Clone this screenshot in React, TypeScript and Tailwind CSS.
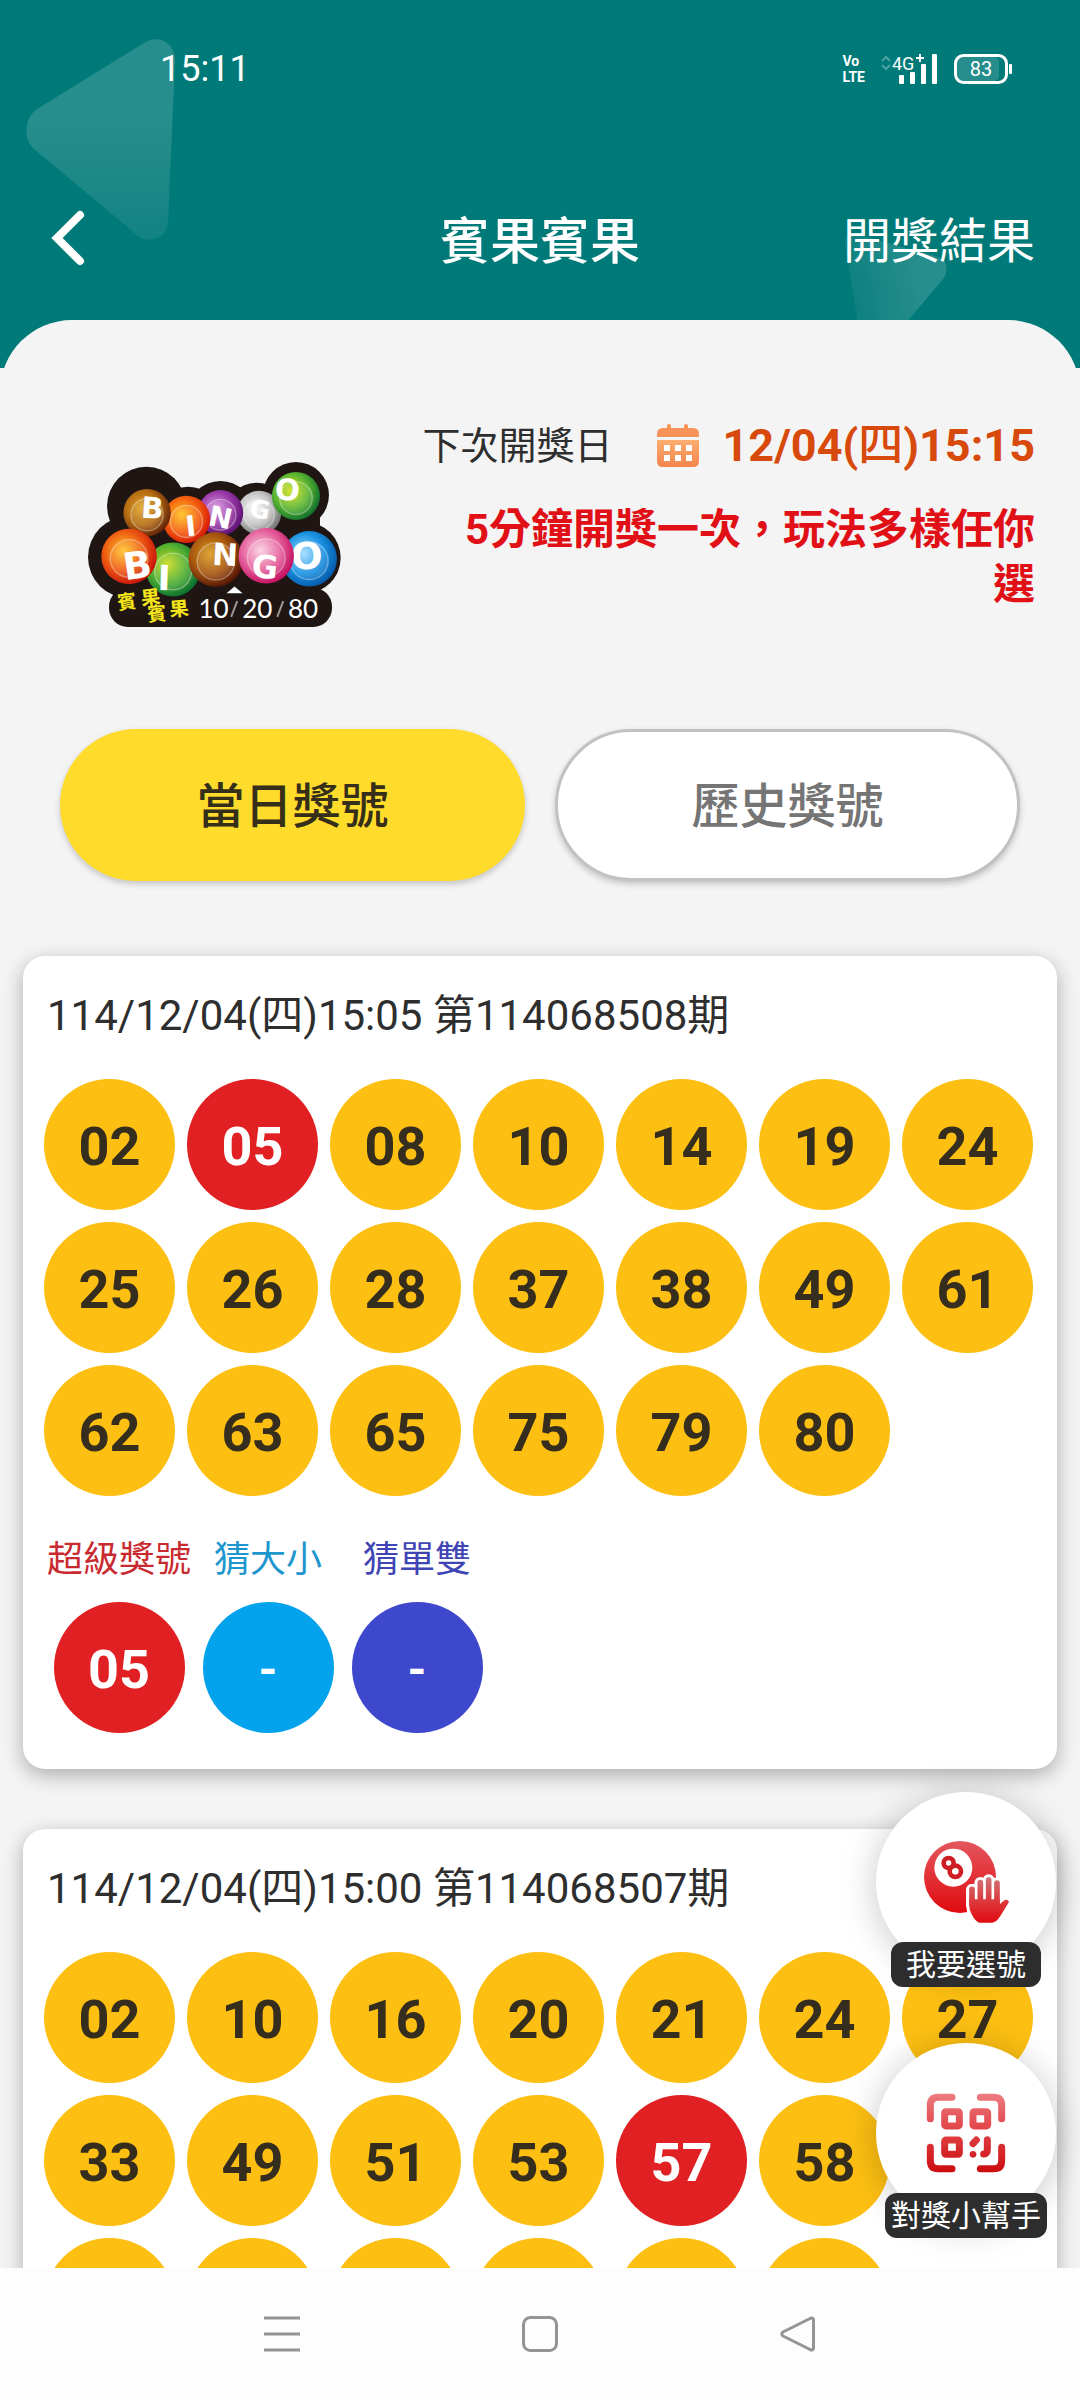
import { useState } from 'react';
import clsx from 'clsx';

type Draw = {
  time: string;
  period: string;
  numbers: string[];
  superNumber: string;
  guesses?: { size: string; parity: string };
};

const DRAW_SIZE = 20;

const draws: Draw[] = [
  {
    time: '114/12/04(四)15:05',
    period: '第114068508期',
    numbers: [
      '02', '05', '08', '10', '14', '19', '24',
      '25', '26', '28', '37', '38', '49', '61',
      '62', '63', '65', '75', '79', '80',
    ],
    superNumber: '05',
    guesses: { size: '-', parity: '-' },
  },
  {
    time: '114/12/04(四)15:00',
    period: '第114068507期',
    numbers: ['02', '10', '16', '20', '21', '24', '27', '33', '49', '51', '53', '57', '58'],
    superNumber: '57',
  },
];

const tabs = ['當日獎號', '歷史獎號'];

const StatusIcons = () => (
  <div className="flex items-center gap-4 text-white">
    <div className="text-[14px] leading-[16px] font-bold">
      <div>Vo</div>
      <div>LTE</div>
    </div>
    <svg className="overflow-visible" width="56" height="32" viewBox="0 0 56 32" fill="none">
      <g stroke="#fff" strokeOpacity="0.3" strokeWidth="2">
        <path d="M1 8l4-4 4 4M1 12l4 4 4-4" />
      </g>
      <text x="11" y="17" fontSize="18" fill="#fff">4G</text>
      <path d="M39 1v8M35 5h8" stroke="#fff" strokeWidth="2" />
      <g fill="#fff">
        <rect x="18" y="22" width="5" height="9" rx="1" />
        <rect x="29" y="19" width="5" height="12" rx="1" />
        <rect x="40" y="11" width="5" height="20" rx="1" />
        <rect x="51" y="1" width="5" height="30" rx="1" />
      </g>
    </svg>
    <svg width="60" height="32" viewBox="0 0 60 32" fill="none">
      <rect x="4" y="4" width="42" height="24" rx="5" fill="#fff" fillOpacity="0.15" />
      <rect x="2.5" y="2.5" width="51" height="27" rx="8" stroke="#fff" strokeWidth="3" />
      <rect x="56" y="11" width="3" height="10" rx="1" fill="#fff" />
      <text x="28" y="23" fontSize="20" fill="#fff" textAnchor="middle">83</text>
    </svg>
  </div>
);

const HeaderShapes = () => (
  <svg className="absolute left-0 top-0" width="1080" height="368" viewBox="0 0 1080 368" fill="none">
    <defs>
      <linearGradient id="shapeLeft" x1="0" y1="40" x2="0" y2="240" gradientUnits="userSpaceOnUse">
        <stop offset="0.4" stopColor="#fff" stopOpacity="0.15" />
        <stop offset="1" stopColor="#fff" stopOpacity="0.07" />
      </linearGradient>
      <linearGradient id="shapeRight" x1="945" y1="270" x2="848" y2="290" gradientUnits="userSpaceOnUse">
        <stop offset="0.3" stopColor="#fff" stopOpacity="0.15" />
        <stop offset="1" stopColor="#fff" stopOpacity="0.05" />
      </linearGradient>
    </defs>
    <path d="M144 43C158 34 175 42 175 60L168 222C167 238 149 245 137 235L34 149C23 140 24 118 37 109Z" fill="url(#shapeLeft)" />
    <path d="M845 244C844 236 850 232 858 235L938 257C947 260 949 270 944 278L905 324H858Z" fill="url(#shapeRight)" />
  </svg>
);

const logoBalls = [
  { id: 'grey', x: 598, y: 215, r: 66, light: '#ffffff', mid: '#c4c4c4', dark: '#6d6d6d', letter: 'G', size: 74, tilt: 10, tx: 596, ty: 231 },
  { id: 'purple', x: 482, y: 215, r: 68, light: '#d79be0', mid: '#9a3aa8', dark: '#5a0f70', letter: 'N', size: 84, tilt: 12, tx: 476, ty: 258 },
  { id: 'orange', x: 380, y: 235, r: 71, light: '#ffc21a', mid: '#f4600f', dark: '#d31408', letter: 'I', size: 84, tilt: -6, tx: 396, ty: 284 },
  { id: 'amber', x: 262, y: 215, r: 71, light: '#e0a52a', mid: '#b56c12', dark: '#5b1d08', letter: 'B', size: 88, tilt: 4, tx: 276, ty: 232 },
  { id: 'green', x: 708, y: 165, r: 72, light: '#d4e21c', mid: '#5cb531', dark: '#0b6a2c', letter: 'O', size: 88, tilt: 4, tx: 680, ty: 177 },
  { id: 'lime', x: 340, y: 385, r: 81, light: '#c9dc1e', mid: '#4fae32', dark: '#04692f', letter: 'I', size: 104, tilt: 2, tx: 312, ty: 447 },
  { id: 'red', x: 208, y: 346, r: 83, light: '#ffc52b', mid: '#ee5a12', dark: '#c40d0c', letter: 'B', size: 112, tilt: -8, tx: 238, ty: 411 },
  { id: 'brown', x: 468, y: 355, r: 82, light: '#d99b1d', mid: '#a8560f', dark: '#4d0f06', letter: 'N', size: 92, tilt: 3, tx: 494, ty: 373 },
  { id: 'blue', x: 748, y: 353, r: 83, light: '#9fdcff', mid: '#1a92e2', dark: '#0456a6', letter: 'O', size: 112, tilt: 0, tx: 740, ty: 385 },
  { id: 'pink', x: 619, y: 344, r: 83, light: '#fbd0e0', mid: '#e5609c', dark: '#c10a5c', letter: 'G', size: 96, tilt: 6, tx: 612, ty: 411 },
];

const BingoLogo = () => (
  <svg className="w-[253px] shrink-0" viewBox="85 60 758 498" role="img" aria-label="BINGO BINGO">
    <defs>
      {logoBalls.map((b) => (
        <radialGradient key={b.id} id={`ball-${b.id}`} cx="0.4" cy="0.4" r="0.65">
          <stop offset="0" stopColor={b.light} />
          <stop offset="0.55" stopColor={b.mid} />
          <stop offset="1" stopColor={b.dark} />
        </radialGradient>
      ))}
    </defs>
    <g fill="#1f1614">
      <circle cx="260" cy="195" r="118" />
      <circle cx="385" cy="240" r="103" />
      <circle cx="482" cy="220" r="100" />
      <circle cx="590" cy="222" r="97" />
      <circle cx="708" cy="162" r="99" />
      <circle cx="208" cy="348" r="123" />
      <circle cx="735" cy="350" r="107" />
      <rect x="160" y="220" width="620" height="260" />
      <rect x="148" y="440" width="668" height="117" rx="56" />
    </g>
    {logoBalls.map((b) => (
      <g key={b.id}>
        <circle cx={b.x} cy={b.y} r={b.r} fill={`url(#ball-${b.id})`} />
        <circle cx={b.x} cy={b.y + 6} r={b.r * 0.68} fill="#fff" fillOpacity="0.1" stroke="#fff" strokeOpacity="0.35" strokeWidth="4" />
        <text
          x={b.tx}
          y={b.ty}
          fontSize={b.size}
          fontFamily="DejaVu Sans"
          fontWeight="700"
          textAnchor="middle"
          fill="#fff"
          transform={`rotate(${b.tilt} ${b.tx} ${b.ty})`}
        >
          {b.letter}
        </text>
      </g>
    ))}
    <path d="M500 456L524 436L548 456Z" fill="#fff" />
    <g fill="#f5e51b" fontSize="58" fontWeight="700">
      <text x="175" y="506" transform="rotate(-7 175 506)">賓</text>
      <text x="246" y="493" transform="rotate(-7 246 493)">果</text>
      <text x="264" y="541" transform="rotate(-5 264 541)">賓</text>
      <text x="331" y="526" transform="rotate(-5 331 526)">果</text>
    </g>
    <g fill="#fff" fontSize="78" fontFamily="Lato">
      <text x="416" y="529">10</text>
      <text x="547" y="529">20</text>
      <text x="684" y="529">80</text>
    </g>
    <g stroke="#9b9694" strokeWidth="6">
      <path d="M514 527L532 480M652 527L670 480" />
    </g>
  </svg>
);

const CalendarIcon = () => (
  <svg width="42" height="44" viewBox="0 0 42 44">
    <defs>
      <linearGradient id="calendar" x1="0" y1="0" x2="0" y2="1">
        <stop offset="0" stopColor="#fcae70" />
        <stop offset="1" stopColor="#f4844c" />
      </linearGradient>
    </defs>
    <path d="M0 13V10Q0 4 6 4H10V2a2 2 0 0 1 4 0V4H27V2a2 2 0 0 1 4 0V4H36Q42 4 42 10V13Z" fill="#f79358" />
    <path d="M0 16H42V37Q42 43 36 43H6Q0 43 0 37Z" fill="url(#calendar)" />
    <g fill="#fff">
      <rect x="7" y="21" width="6" height="6" />
      <rect x="18" y="21" width="6" height="6" />
      <rect x="29" y="21" width="6" height="6" />
      <rect x="7" y="31" width="6" height="6" />
      <rect x="18" y="31" width="6" height="6" />
      <rect x="29" y="31" width="6" height="6" />
    </g>
  </svg>
);

const PickIcon = () => (
  <svg width="87" height="84" viewBox="68 57 261 252" fill="none">
    <defs>
      <linearGradient id="pickBall" x1="0" y1="59" x2="0" y2="277" gradientUnits="userSpaceOnUse">
        <stop offset="0" stopColor="#e4575e" />
        <stop offset="1" stopColor="#e00a0f" />
      </linearGradient>
      <linearGradient id="pickHand" x1="0" y1="170" x2="0" y2="306" gradientUnits="userSpaceOnUse">
        <stop offset="0" stopColor="#cf7479" />
        <stop offset="0.5" stopColor="#dc3a3f" />
        <stop offset="1" stopColor="#e00a0f" />
      </linearGradient>
    </defs>
    <circle cx="179" cy="168" r="108" fill="url(#pickBall)" />
    <circle cx="159" cy="140" r="57" fill="#fff" />
    <g stroke="#cf1d24" strokeWidth="14">
      <circle cx="145" cy="126" r="15" />
      <circle cx="165" cy="151" r="17" />
    </g>
    <g stroke="#fff" strokeLinecap="round" strokeLinejoin="round">
      <path d="M215 206V250M240 186V250M265 178V250M290 187V250" strokeWidth="36" />
      <path d="M208 232H298V250L312 240Q322 234 326 243L300 285Q288 304 276 305H238Q226 304 214 280Q208 268 208 255Z" fill="#fff" strokeWidth="20" />
    </g>
    <path d="M215 205V250M240 185V250M265 177V250M290 186V250" stroke="url(#pickHand)" strokeWidth="17" strokeLinecap="round" />
    <path d="M207 235H298V250L312 238Q322 232 326 243L300 285Q288 304 276 305H238Q226 304 214 280Q207 268 207 255Z" fill="url(#pickHand)" />
  </svg>
);

const ScanIcon = () => (
  <svg width="80" height="80" viewBox="258 279 240 240" fill="none">
    <defs>
      <linearGradient id="scan" x1="0" y1="282" x2="0" y2="516" gradientUnits="userSpaceOnUse">
        <stop offset="0" stopColor="#ec7c80" />
        <stop offset="0.4" stopColor="#e34a4e" />
        <stop offset="1" stopColor="#cb0c10" />
      </linearGradient>
    </defs>
    <g stroke="url(#scan)" strokeWidth="21" strokeLinecap="round">
      <path d="M271 356V316Q271 292 295 292H336" />
      <path d="M421 292H461Q485 292 485 316V356" />
      <path d="M271 442V482Q271 506 295 506H336" />
      <path d="M421 506H461Q485 506 485 482V442" />
      <rect x="314" y="335" width="44" height="43" rx="4" />
      <rect x="399" y="335" width="44" height="43" rx="4" />
      <rect x="314" y="420" width="44" height="43" rx="4" />
      <path d="M399 431L409 420" />
      <path d="M442 419V448Q442 462 431 462" />
    </g>
    <circle cx="399" cy="463" r="10" fill="url(#scan)" />
  </svg>
);

const Ball = ({ value, className }: { value?: string; className: string }) => (
  <div className={clsx('flex items-center justify-center rounded-full pt-1 font-bold', className)}>{value}</div>
);

const DrawCard = ({ draw }: { draw: Draw }) => {
  const extras = draw.guesses
    ? [
        { label: '超級獎號', value: draw.superNumber, text: 'text-[#c92a30]', ball: 'bg-[#e02023] text-[54px]' },
        { label: '猜大小', value: draw.guesses.size, text: 'text-[#1c96cd]', ball: 'bg-[#02a2ec] text-[48px]' },
        { label: '猜單雙', value: draw.guesses.parity, text: 'text-[#3f45b4]', ball: 'bg-[#3e48cc] text-[48px]' },
      ]
    : [];

  return (
    <article className="rounded-[22px] bg-white pt-[30px] pr-6 pb-9 pl-[21px] shadow-[0_6px_20px_rgba(0,0,0,0.3)]">
      <h2 className="pl-[3px] text-[42px] leading-[60px] text-[#2e2e2e]">
        {draw.time} {draw.period}
      </h2>

      <div className="mt-[33px] grid grid-cols-7 gap-3">
        {Array.from({ length: DRAW_SIZE }, (_, i) => (
          <Ball
            key={i}
            value={draw.numbers[i]}
            className={clsx(
              'aspect-square text-[54px]',
              draw.numbers[i] === draw.superNumber ? 'bg-[#e02023] text-white' : 'bg-[#fdbf12] text-[#352d1d]'
            )}
          />
        ))}
      </div>

      {extras.length > 0 && (
        <dl className="mt-[42px] flex gap-[5px] pl-[3px]">
          {extras.map((extra) => (
            <div key={extra.label} className="flex w-36 flex-col items-center">
              <dt className={clsx('text-[36px] leading-[44px]', extra.text)}>{extra.label}</dt>
              <dd className="mt-5">
                <Ball value={extra.value} className={clsx('size-[131px] text-white', extra.ball)} />
              </dd>
            </div>
          ))}
        </dl>
      )}
    </article>
  );
};

const FloatingButton = ({ label, icon }: { label: string; icon: React.ReactNode }) => (
  <button type="button" className="relative flex w-[180px] flex-col items-center">
    <span className="flex size-[180px] items-center justify-center rounded-full bg-white shadow-[0_4px_36px_rgba(0,0,0,0.22)]">
      {icon}
    </span>
    <span className="-mt-[30px] min-w-[150px] rounded-xl bg-[#2d2d2d] px-1.5 text-[30px] leading-[45px] text-white">
      {label}
    </span>
  </button>
);

export default function App() {
  const [activeTab, setActiveTab] = useState(tabs[0]);

  return (
    <div
      lang="zh-TW"
      className="relative flex h-screen flex-col overflow-hidden bg-[#f4f4f4] font-[Roboto,'Noto_Sans_CJK_TC',sans-serif]"
    >
      <header className="relative overflow-hidden bg-[#007a78] pb-[46px] text-white">
        <HeaderShapes />
        <div className="relative flex h-[90px] items-center justify-between pt-12 pr-[67px] pl-[160px]">
          <time className="text-[36px]">15:11</time>
          <StatusIcons />
        </div>
        <div className="relative mt-[72px] grid h-40 grid-cols-[1fr_auto_1fr] items-center px-[45px]">
          <button type="button" aria-label="返回" className="justify-self-start pb-1.5 pl-1.5">
            <svg width="34" height="58" viewBox="0 0 34 58" fill="none" stroke="#fff" strokeWidth="8" strokeLinecap="round">
              <path d="M29 5L6 28L29 51" />
            </svg>
          </button>
          <h1 className="text-[50px] font-medium">賓果賓果</h1>
          <a href="#results" className="justify-self-end text-[48px]">開獎結果</a>
        </div>
      </header>

      <main className="relative -mt-12 min-h-0 flex-1 overflow-y-auto rounded-t-[72px] bg-[#f4f4f4] [scrollbar-width:none]">
        <section className="flex items-start pt-[98px] pr-[45px] pl-[88px]">
          <div className="mt-[43px]">
            <BingoLogo />
          </div>
          <div className="flex-1 pl-20 text-right">
            <div className="flex h-14 items-center justify-end whitespace-nowrap">
              <span className="text-[38px] text-[#2e2e2e]">下次開獎日</span>
              <span className="mr-6 ml-11">
                <CalendarIcon />
              </span>
              <span className="text-[45px] font-bold text-[#d84a0c]">
                12/04(<span className="font-medium">四</span>)15:15
              </span>
            </div>
            <p className="mt-7 pl-8 text-[42px] leading-[55px] font-bold text-[#e01016]">
              5分鐘開獎一次，玩法多樣任你選
            </p>
          </div>
        </section>

        <div className="mt-[102px] grid grid-cols-2 gap-[30px] px-[60px]">
          {tabs.map((tab) => (
            <button
              key={tab}
              type="button"
              onClick={() => setActiveTab(tab)}
              className={clsx(
                'h-38 rounded-full pt-1 text-[48px] font-medium shadow-[0_3px_6px_rgba(0,0,0,0.2)]',
                activeTab === tab ? 'bg-[#ffdc2c] text-[#352f1a]' : 'border-3 border-[#c2c2c2] bg-white text-[#757575]'
              )}
            >
              {tab}
            </button>
          ))}
        </div>

        <div className="mt-[75px] flex flex-col gap-[60px] px-[23px] pb-[60px]">
          {draws.map((draw) => (
            <DrawCard key={draw.period} draw={draw} />
          ))}
        </div>
      </main>

      {/* Floating shortcuts sit above the system navigation */}
      <div className="absolute right-6 bottom-[162px] flex flex-col gap-14">
        <FloatingButton label="我要選號" icon={<PickIcon />} />
        <FloatingButton label="對獎小幫手" icon={<ScanIcon />} />
      </div>

      <nav className="relative flex h-33 items-center justify-center gap-[222px] bg-[#fdfdfd]">
        <button type="button" aria-label="選單">
          <svg width="36" height="36" viewBox="0 0 36 36" stroke="#949494" strokeWidth="3">
            <path d="M0 2H36M0 18H36M0 34H36" />
          </svg>
        </button>
        <button type="button" aria-label="首頁">
          <svg width="36" height="36" viewBox="0 0 36 36" fill="none" stroke="#949494" strokeWidth="3">
            <rect x="1.5" y="1.5" width="33" height="33" rx="7" />
          </svg>
        </button>
        <button type="button" aria-label="上一頁">
          <svg width="36" height="36" viewBox="0 0 36 36" fill="none" stroke="#949494" strokeWidth="3" strokeLinejoin="round">
            <path d="M30 2.500Q33.500 1 33.500 4V32Q33.500 35 30 33.500L3 20Q0.500 18 3 16Z" />
          </svg>
        </button>
      </nav>
    </div>
  );
}
